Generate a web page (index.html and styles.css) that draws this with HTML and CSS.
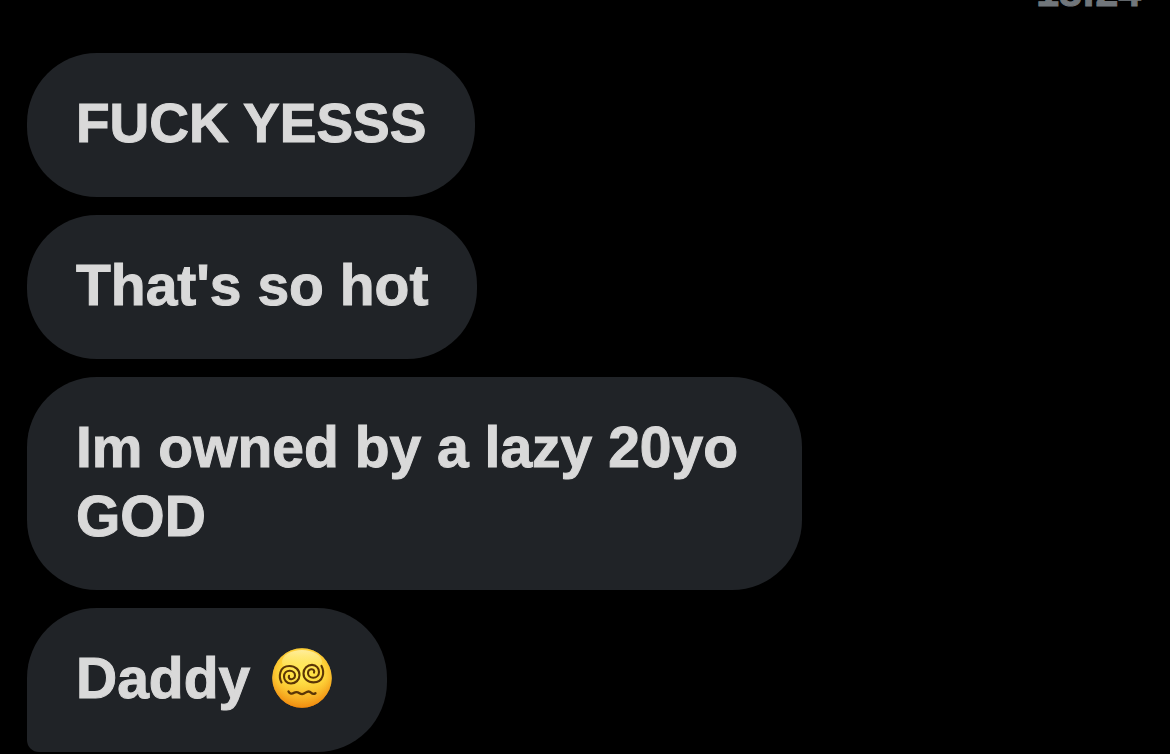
FILE: index.html
```
<!DOCTYPE html>
<html lang="en">
<head>
<meta charset="utf-8">
<title>Messages</title>
<link rel="stylesheet" href="styles.css">
</head>
<body>
<main class="thread">
  <time class="stamp" datetime="18:24">18:24</time>
  <ul class="messages">
    <li class="bubble bubble-caps">FUCK YESSS</li>
    <li class="bubble">That's so hot</li>
    <li class="bubble">Im owned by a lazy 20yo GOD</li>
    <li class="bubble bubble-last">Daddy <svg class="emoji" viewBox="0 0 60 60" role="img" aria-label="Face with spiral eyes">
      <defs>
        <linearGradient id="face" x1="0" y1="0" x2="0" y2="1">
          <stop offset="0" stop-color="#ffd83c"/>
          <stop offset="0.5" stop-color="#ffdc3e"/>
          <stop offset="1" stop-color="#f08208"/>
        </linearGradient>
        <radialGradient id="edge" cx="0.5" cy="0.42" r="0.58">
          <stop offset="0" stop-color="#fff35e" stop-opacity="0.7"/>
          <stop offset="0.6" stop-color="#ffd83c" stop-opacity="0.4"/>
          <stop offset="1" stop-color="#f08c10" stop-opacity="0.85"/>
        </radialGradient>
        <linearGradient id="shine" x1="0" y1="0" x2="0" y2="1">
          <stop offset="0" stop-color="#fffbd0" stop-opacity="0.65"/>
          <stop offset="1" stop-color="#fff27a" stop-opacity="0"/>
        </linearGradient>
      </defs>
      <circle cx="30" cy="30" r="29.7" fill="url(#face)"/>
      <circle cx="30" cy="30" r="29.7" fill="url(#edge)"/>
      <ellipse cx="30" cy="14" rx="20" ry="12" fill="url(#shine)"/>
      <g fill="none" stroke="#5b3506" stroke-width="2.1" stroke-linecap="round">
        <path id="spiral" d="M9.500 34.500C6.500 29 7 18 17.500 18C23.500 18 27.500 22 27.500 27C27.500 32 23.500 35.500 19 35.500C14.500 35.500 12 32 12 28.500C12 25 14.500 22.700 17.800 22.700C21 22.700 23 25 23 27.500C23 30 21 31.300 19.200 31.200C17.300 31.100 16.300 29.500 17 27.800"/>
        <use href="#spiral" transform="rotate(180 29.500 26.200)"/>
        <path stroke-width="2.300" d="M16.500 43.500C17.500 45.800 20 46.200 22 44.800C24 43.500 25.500 43.800 27.500 45.200C29.500 46.600 31.500 46.300 33.500 44.700C35.500 43.200 37.500 43 39 44.600C40.500 46.100 42 46.300 43.500 45.200"/>
      </g>
    </svg></li>
  </ul>
</main>
</body>
</html>
```
FILE: styles.css
```
body {
  margin: 0;
  background: #000;
  color: #d9d9d9;
  font-family: "Liberation Sans", Arial, sans-serif;
  font-weight: 700;
  overflow: hidden;
}

.thread {
  display: flex;
  flex-direction: column;
  gap: 41px;
  padding: 0 27px;
}

/* The time of the preceding message, scrolled almost out of view. */
.stamp {
  align-self: flex-end;
  margin-top: -28px;
  padding-right: 2px;
  font-size: 41px;
  line-height: 40px;
  color: #71767b;
  -webkit-text-stroke: 1px #71767b;
}

.messages {
  display: flex;
  flex-direction: column;
  align-items: flex-start;
  gap: 18px;
  margin: 0;
  padding: 0;
  list-style: none;
}

.bubble {
  box-sizing: border-box;
  max-width: 69.4%;
  padding: 36px 49px 39px;
  border-radius: 70px;
  background: #202327;
  font-size: 57px;
  line-height: 69px;
  -webkit-text-stroke: 1px #d9d9d9;
}

.bubble-caps {
  font-size: 55px;
}

.bubble-last {
  border-bottom-left-radius: 12px;
}

.emoji {
  width: 60px;
  height: 60px;
  margin: -10px 6px;
  vertical-align: 0;
}
```
